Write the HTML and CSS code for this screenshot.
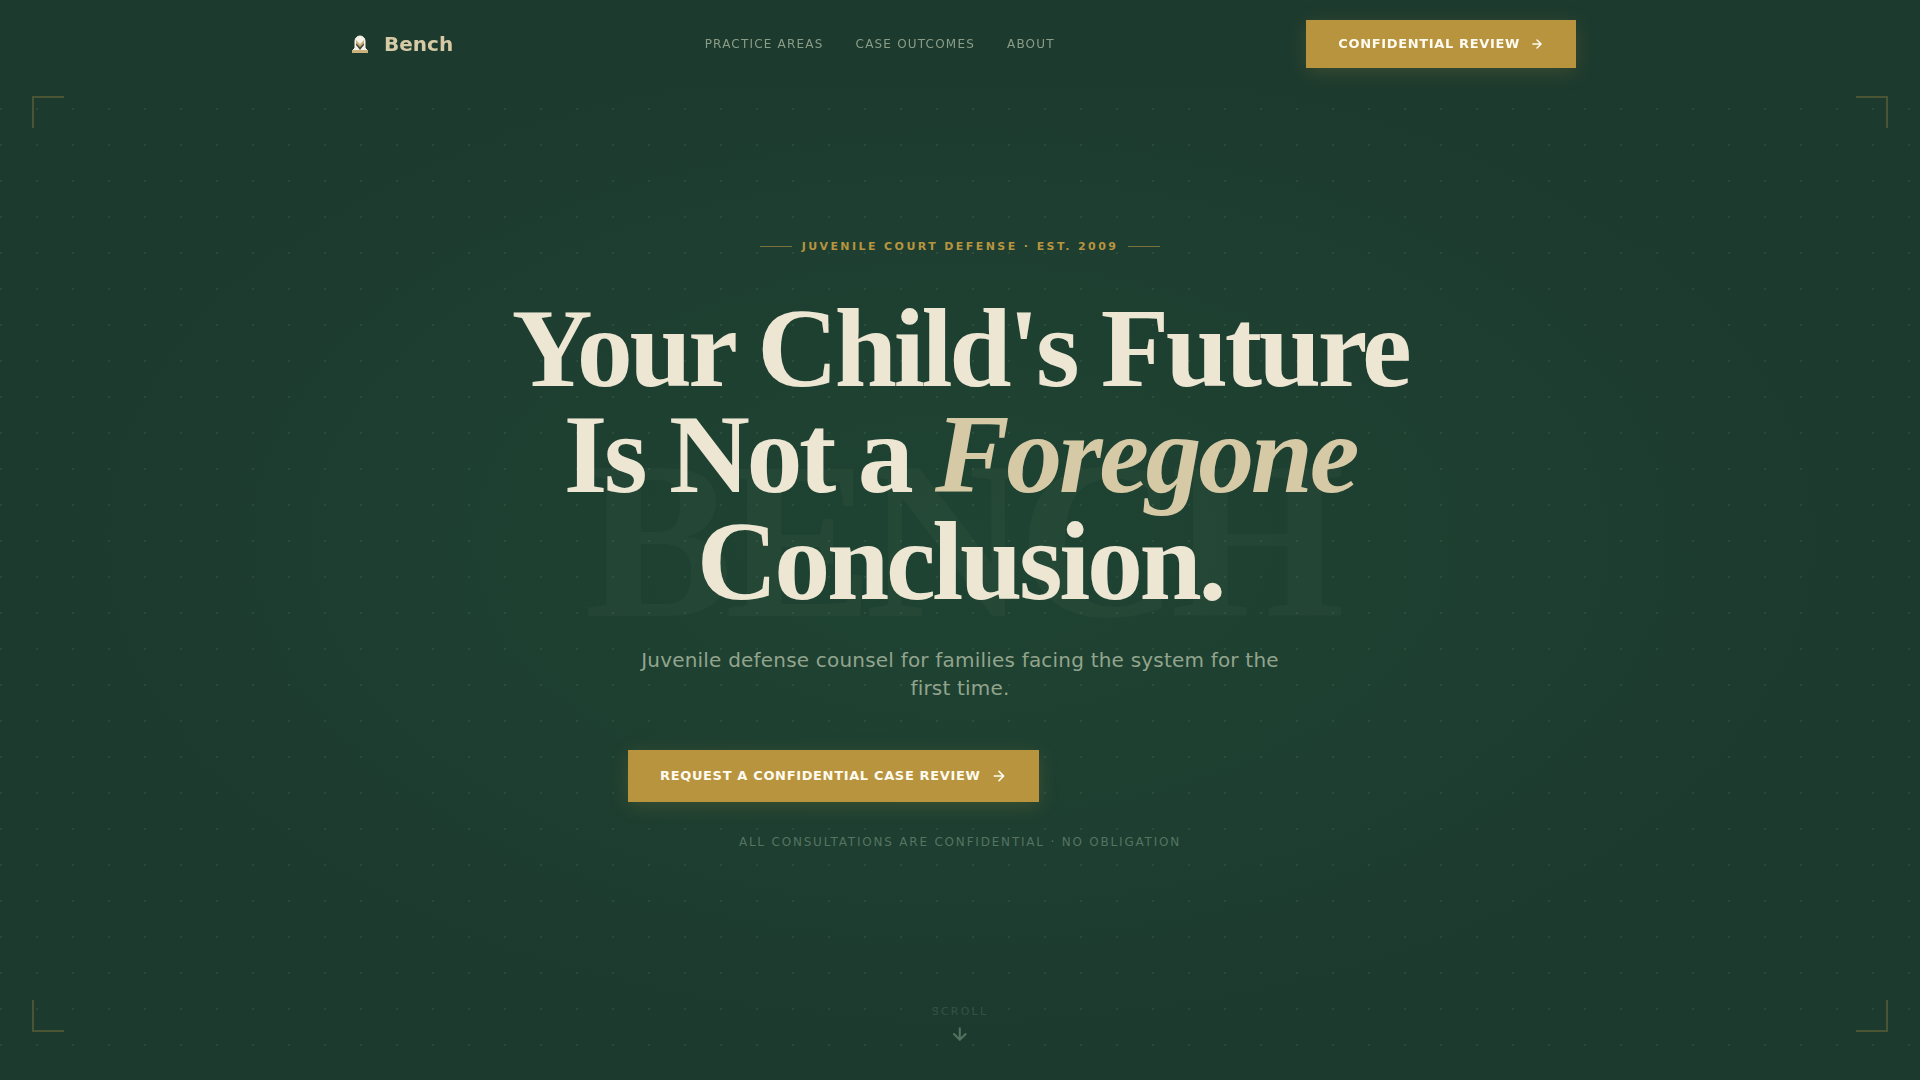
FILE: index.html
```html
<!DOCTYPE html>
<html lang="en">
<head>
<meta charset="UTF-8">
<meta name="viewport" content="width=device-width, initial-scale=1">
<title>Bench - Juvenile Court Defense</title>
<link rel="stylesheet" href="styles.css">
</head>
<body>
  <header class="site-header">
    <div class="header-inner">
      <a class="logo" href="#">
        <svg class="logo-mark" viewBox="0 0 32 32" aria-hidden="true">
          <path d="M9 22l2-2v-7a5 5 0 0 1 10 0v7l2 2z" fill="#f7f3e8" stroke="#f7f3e8"/>
          <path d="M12 15l4 3 4-3v2l-4 5-4-5z" fill="#4a4a3a"/>
          <path d="M12 12l4 4 4-4v3l-4 4-4-4z" fill="#c9b27c"/>
          <rect x="8" y="22" width="16" height="3" fill="#c9b27c"/>
        </svg>
        <span>Bench</span>
      </a>
      <nav class="main-nav" aria-label="Main">
        <a href="#practice">Practice Areas</a>
        <a href="#outcomes">Case Outcomes</a>
        <a href="#about">About</a>
      </nav>
      <a class="btn" href="#review">
        Confidential Review
        <svg class="icon" viewBox="0 0 24 24" aria-hidden="true"><path d="M5 12h14M12 5l7 7-7 7"/></svg>
      </a>
    </div>
  </header>

  <main class="hero">
    <div class="watermark" aria-hidden="true">BENCH</div>
    <span class="corner corner-tl"></span>
    <span class="corner corner-tr"></span>
    <span class="corner corner-bl"></span>
    <span class="corner corner-br"></span>

    <div class="hero-content">
      <p class="eyebrow">Juvenile Court Defense · Est. 2009</p>
      <h1>Your Child's Future<br>Is Not a <em>Foregone</em><br>Conclusion.</h1>
      <p class="subtitle">Juvenile defense counsel for families facing the system for the first time.</p>
      <div class="hero-actions">
        <a class="btn btn-large" href="#review">
          Request a Confidential Case Review
          <svg class="icon" viewBox="0 0 24 24" aria-hidden="true"><path d="M5 12h14M12 5l7 7-7 7"/></svg>
        </a>
      </div>
      <p class="note">All consultations are confidential · No obligation</p>
    </div>

    <a class="scroll-hint" href="#practice">
      Scroll
      <svg class="icon" viewBox="0 0 24 24" aria-hidden="true"><path d="M12 5v14M5 12l7 7 7-7"/></svg>
    </a>
  </main>
</body>
</html>
```
FILE: styles.css
```css
:root {
  --green: #1c3a2e;
  --green-light: #1f4433;
  --gold: #b8943f;
  --cream: #ede6d3;
  --sand: #d6c9a5;
  --sans: "DejaVu Sans", sans-serif;
  --serif: "Liberation Serif", serif;
}

* {
  box-sizing: border-box;
}

body {
  margin: 0;
  background: var(--green);
  color: var(--cream);
  font-family: var(--sans);
}

a {
  color: inherit;
  text-decoration: none;
}

/* Header */
.site-header {
  position: fixed;
  top: 0;
  left: 0;
  right: 0;
  z-index: 10;
  background: var(--green);
}

.header-inner {
  display: flex;
  align-items: center;
  justify-content: space-between;
  max-width: 1280px;
  margin: 0 auto;
  padding: 20px 24px;
}

.logo {
  display: flex;
  align-items: center;
  gap: 8px;
  color: var(--sand);
  font-size: 20px;
  font-weight: 700;
}

.logo-mark {
  width: 32px;
  height: 32px;
}

.main-nav {
  display: flex;
  gap: 32px;
  color: #8c9d87;
  font-size: 12px;
  letter-spacing: 0.1em;
  text-transform: uppercase;
}

.btn {
  display: inline-flex;
  align-items: center;
  gap: 10px;
  height: 48px;
  padding: 0 32px;
  background: var(--gold);
  color: #fffbf0;
  font-size: 13px;
  font-weight: 700;
  letter-spacing: 0.05em;
  line-height: 16px;
  text-transform: uppercase;
  white-space: nowrap;
  box-shadow: 0 4px 20px rgba(184, 148, 63, 0.2);
}

.btn-large {
  height: 52px;
}

.icon {
  width: 14px;
  height: 14px;
  fill: none;
  stroke: currentColor;
  stroke-width: 2.5;
  stroke-linecap: round;
  stroke-linejoin: round;
}

.btn-large .icon {
  width: 16px;
  height: 16px;
}

/* Hero */
.hero {
  position: relative;
  display: flex;
  flex-direction: column;
  align-items: center;
  justify-content: center;
  min-height: 100vh;
  padding: 88px 24px 80px;
  overflow: hidden;
  background:
    radial-gradient(circle at 1px 1px, rgba(160, 200, 165, 0.1) 1px, transparent 1px) 0 0 / 36px 36px,
    radial-gradient(ellipse at center, var(--green-light) 0%, var(--green) 70%);
}

.watermark {
  position: absolute;
  top: 50%;
  left: 50%;
  transform: translate(-50%, -50%);
  color: rgba(214, 201, 165, 0.04);
  font-family: var(--serif);
  font-size: 224px;
  font-weight: 700;
  letter-spacing: -0.04em;
  line-height: 1;
}

.corner {
  position: absolute;
  width: 32px;
  height: 32px;
  border: 0 solid rgba(184, 148, 63, 0.3);
}

.corner-tl {
  top: 96px;
  left: 32px;
  border-width: 2px 0 0 2px;
}

.corner-tr {
  top: 96px;
  right: 32px;
  border-width: 2px 2px 0 0;
}

.corner-bl {
  bottom: 48px;
  left: 32px;
  border-width: 0 0 2px 2px;
}

.corner-br {
  bottom: 48px;
  right: 32px;
  border-width: 0 2px 2px 0;
}

.hero-content {
  position: relative;
  display: flex;
  flex-direction: column;
  align-items: center;
  text-align: center;
}

.eyebrow {
  display: flex;
  align-items: center;
  gap: 10px;
  margin: 0 0 40px;
  color: var(--gold);
  font-size: 11px;
  font-weight: 700;
  letter-spacing: 0.22em;
  line-height: 17px;
  text-transform: uppercase;
}

.eyebrow::before,
.eyebrow::after {
  content: "";
  width: 32px;
  height: 1px;
  background: rgba(184, 148, 63, 0.6);
}

h1 {
  margin: 0 0 32px;
  font-family: var(--serif);
  font-size: 112px;
  font-weight: 700;
  letter-spacing: -0.03em;
  line-height: 0.95;
}

h1 em {
  color: var(--sand);
}

.subtitle {
  max-width: 664px;
  margin: 0 0 48px;
  color: #93a48d;
  font-size: 20px;
  letter-spacing: 0.01em;
  line-height: 28px;
}

.hero-actions {
  display: flex;
  width: 100%;
  max-width: 664px;
  margin-bottom: 32px;
}

.note {
  margin: 0;
  color: #557462;
  font-size: 12px;
  letter-spacing: 0.15em;
  line-height: 16px;
  text-transform: uppercase;
}

.scroll-hint {
  position: absolute;
  bottom: 36px;
  left: 50%;
  transform: translateX(-50%);
  display: flex;
  flex-direction: column;
  align-items: center;
  gap: 6px;
  color: #335443;
  font-size: 11px;
  letter-spacing: 0.2em;
  text-transform: uppercase;
}

.scroll-hint .icon {
  width: 20px;
  height: 20px;
  color: #53725f;
}
```
